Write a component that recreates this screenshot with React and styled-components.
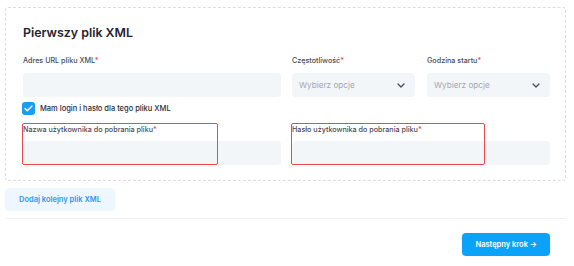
import styled, { createGlobalStyle } from 'styled-components';

const GlobalStyle = createGlobalStyle`
	html, body {
		margin: 0;
		padding: 0;
		background: #ffffff;
	}
	body {
		font-family: Inter, 'Noto Sans', sans-serif;
		color: #2a2a35;
	}
`;

const Page = styled.main`
	width: 561px;
	margin-left: 5px;
	padding-top: 7px;
`;

const Card = styled.section`
	border: 1px dashed #dcdde6;
	border-radius: 3px;
	padding: 15px 15px 15px 17px;
	h2 {
		margin: 0 0 14px;
		font-size: 12.4px;
		font-weight: 600;
		color: #23232d;
		line-height: 20px;
	}
`;

const Grid = styled.div`
	display: grid;
	grid-template-columns: 1fr 1fr;
	column-gap: 11px;
`;

const SubGrid = styled.div`
	display: grid;
	grid-template-columns: 1fr 1fr;
	column-gap: 12px;
`;

const Field = styled.div`
	position: relative;
	display: flex;
	flex-direction: column;
	gap: ${(p) => p.$gap || 8}px;
`;

const Label = styled.label`
	font-size: 7.2px;
	font-weight: 500;
	line-height: 8px;
	color: #4a4a55;
	span {
		color: #f04848;
	}
`;

const Input = styled.div`
	height: 24px;
	border-radius: 4px;
	background: #f3f6f9;
`;

const Select = styled(Input)`
	display: flex;
	align-items: center;
	justify-content: space-between;
	padding: 0 10px 0 7px;
	font-size: 8.2px;
	color: #a3a7b0;
`;

const Highlight = styled.div`
	position: absolute;
	left: -1px;
	top: -3px;
	width: ${(p) => p.$width}px;
	height: 42px;
	border: 1.5px solid #ea4a4a;
	border-radius: 2px;
	box-sizing: border-box;
	pointer-events: none;
`;

const Check = styled.label`
	display: flex;
	align-items: center;
	gap: 5px;
	margin: 5px 0 11px -1px;
	font-size: 7.5px;
	font-weight: 500;
	color: #2a2a35;
`;

const Box = styled.span`
	width: 13px;
	height: 13px;
	border-radius: 3px;
	background: #1b9cf2;
	display: grid;
	place-items: center;
`;

const Actions = styled.div`
	display: flex;
	justify-content: ${(p) => p.$align || 'flex-start'};
	padding: ${(p) => p.$pad || '0'};
`;

const Button = styled.button`
	height: 23px;
	border: none;
	border-radius: 4px;
	font-family: inherit;
	font-size: 7.5px;
	font-weight: 600;
	cursor: pointer;
	background: ${(p) => (p.$primary ? '#0aa2fb' : '#eef7ff')};
	color: ${(p) => (p.$primary ? '#ffffff' : '#2b9af0')};
	padding: ${(p) => (p.$primary ? '0 13px' : '0 14px')};
`;

const Divider = styled.hr`
	border: none;
	border-top: 1px solid #f0f1f4;
	margin: 7px 0 14px;
`;

const Chevron = () => (
	<svg width='8' height='5' viewBox='0 0 8 5' fill='none'>
		<path d='M1 1l3 3 3-3' stroke='#4a4a55' strokeWidth='1.3' strokeLinecap='round' strokeLinejoin='round' />
	</svg>
);

const App = () => {
	return (
		<>
			<GlobalStyle />
			<Page>
				<Card>
					<h2>Pierwszy plik XML</h2>
					<Grid>
						<Field>
							<Label>
								Adres URL pliku XML<span>*</span>
							</Label>
							<Input />
						</Field>
						<SubGrid>
							<Field>
								<Label>
									Częstotliwość<span>*</span>
								</Label>
								<Select>
									Wybierz opcje
									<Chevron />
								</Select>
							</Field>
							<Field>
								<Label>
									Godzina startu<span>*</span>
								</Label>
								<Select>
									Wybierz opcje
									<Chevron />
								</Select>
							</Field>
						</SubGrid>
					</Grid>
					<Check>
						<Box>
							<svg width='9' height='7' viewBox='0 0 9 7' fill='none'>
								<path d='M1 3.6l2.3 2.2L8 1' stroke='#fff' strokeWidth='1.4' strokeLinecap='round' strokeLinejoin='round' />
							</svg>
						</Box>
						Mam login i hasło dla tego pliku XML
					</Check>
					<Grid>
						<Field $gap={7}>
							<Label>
								Nazwa użytkownika do pobrania pliku<span>*</span>
							</Label>
							<Input />
							<Highlight $width={196} />
						</Field>
						<Field $gap={7}>
							<Label>
								Hasło użytkownika do pobrania pliku<span>*</span>
							</Label>
							<Input />
							<Highlight $width={194} />
						</Field>
					</Grid>
				</Card>
				<Actions $pad='7px 0 0'>
					<Button>Dodaj kolejny plik XML</Button>
				</Actions>
				<Divider />
				<Actions $align='flex-end' $pad='0 16px 0 0'>
					<Button $primary>Następny krok →</Button>
				</Actions>
			</Page>
		</>
	);
};

export default App;
